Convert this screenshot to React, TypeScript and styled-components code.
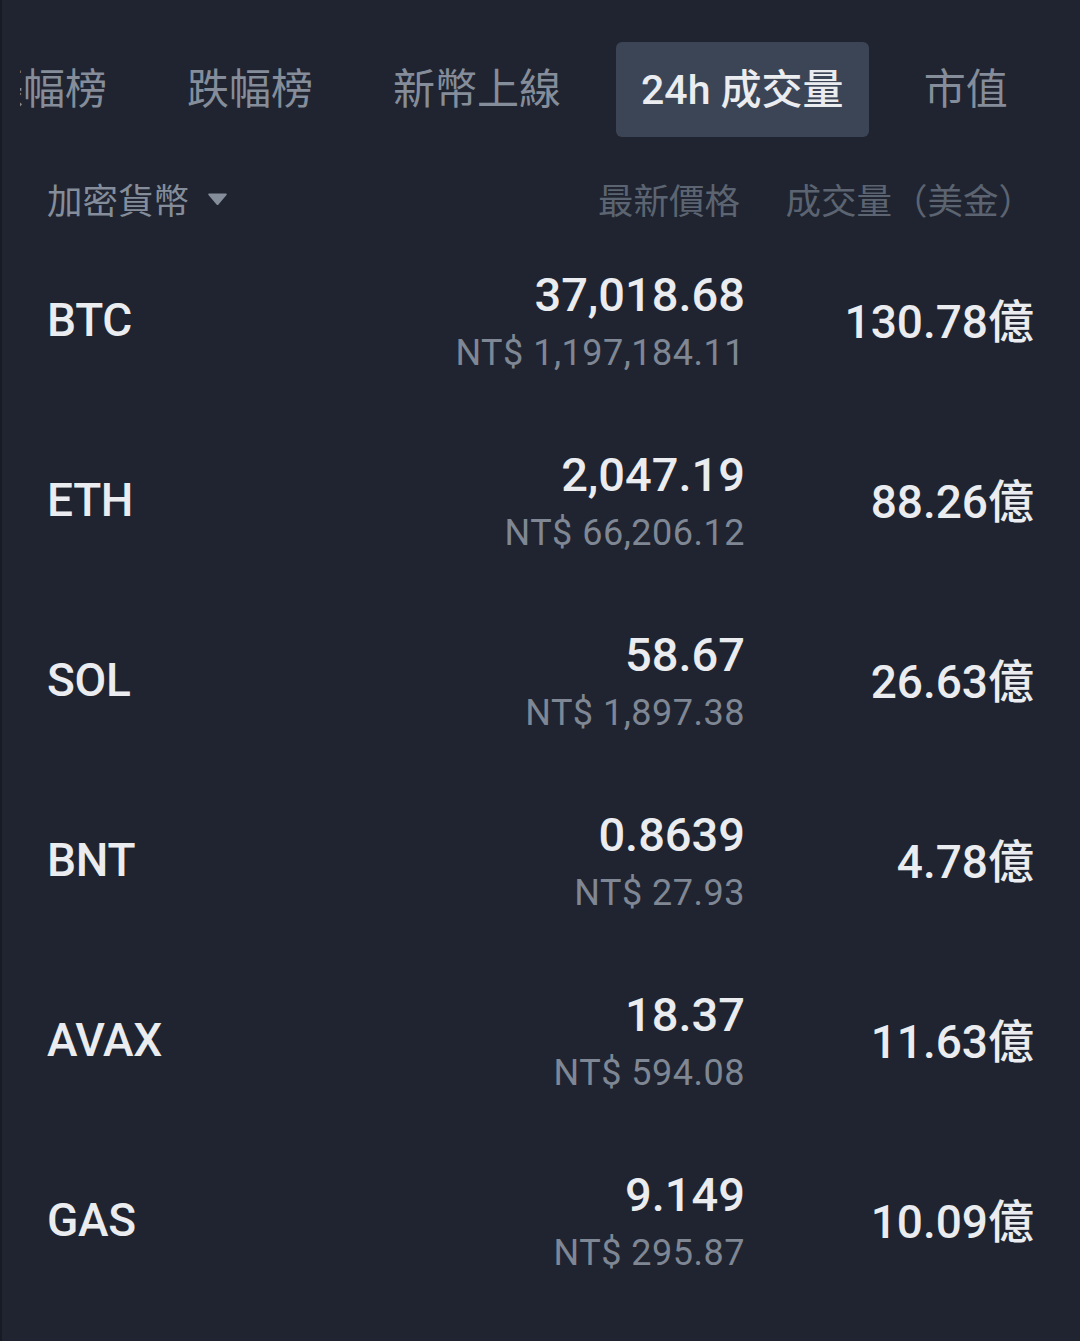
import React from "react";
import styled, { createGlobalStyle } from "styled-components";

const Global = createGlobalStyle`
  html, body { margin: 0; padding: 0; background: #1f2430; }
  body { font-family: Roboto, "Noto Sans CJK TC", sans-serif; }
  * { box-sizing: border-box; }
`;

const Page = styled.div`
  width: 1080px;
  height: 1341px;
  background: #1f2430;
  border-left: 2px solid #171b23;
  overflow: hidden;
`;

const TabViewport = styled.div`
  margin: 42px 0 0 18px;
  overflow: hidden;
  height: 95px;
`;

const TabStrip = styled.div`
  display: flex;
  gap: 30px;
  margin-left: -64px;
  height: 95px;
  white-space: nowrap;
`;

const Tab = styled.div<{ $active?: boolean }>`
  display: flex;
  align-items: center;
  padding: 0 25px 8px;
  height: 95px;
  border-radius: 6px;
  font-family: Roboto, "Noto Sans CJK TC", sans-serif;
  font-size: ${(p) => (p.$active ? "41px" : "42px")};
  font-weight: ${(p) => (p.$active ? 500 : 400)};
  color: ${(p) => (p.$active ? "#eaecef" : "#858d9a")};
  background: ${(p) => (p.$active ? "#3c4555" : "transparent")};
  flex: none;
`;

const Table = styled.div`
  padding: 0 46px 0 45px;
`;

const HeaderRow = styled.div`
  display: grid;
  grid-template-columns: 1fr auto 294px;
  align-items: center;
  height: 93px;
  padding-top: 30px;
`;

const HeadLabel = styled.div<{ $dim?: boolean }>`
  display: flex;
  align-items: center;
  justify-content: ${(p) => (p.$dim ? "flex-end" : "flex-start")};
  gap: 18px;
  font-family: "Noto Sans CJK TC", sans-serif;
  font-size: 35.5px;
  color: ${(p) => (p.$dim ? "#5c6472" : "#858d9a")};
`;

const Row = styled.div`
  display: grid;
  grid-template-columns: 1fr auto 289px;
  align-items: center;
  height: 180px;
`;

const Symbol = styled.div`
  font-family: Roboto, sans-serif;
  font-size: 46px;
  font-weight: 500;
  color: #eaecef;
  letter-spacing: -0.3px;
`;

const PriceCol = styled.div`
  display: flex;
  flex-direction: column;
  align-items: flex-end;
  gap: 10px;
`;

const Price = styled.div`
  font-family: Roboto, sans-serif;
  font-size: 47px;
  line-height: 56px;
  font-weight: 500;
  color: #eaecef;
`;

const Fiat = styled.div`
  font-family: Roboto, sans-serif;
  font-size: 36px;
  line-height: 40px;
  color: #7f8794;
  letter-spacing: 0.5px;
`;

const Volume = styled.div`
  text-align: right;
  font-family: Roboto, "Noto Sans CJK TC", sans-serif;
  font-size: 46px;
  font-weight: 500;
  color: #eaecef;
  padding-bottom: 4px;
`;

const Caret = () => (
  <svg width="21" height="14" viewBox="0 0 21 14">
    <path d="M2 1.5 H19 Q20.5 1.5 19.5 3 L11.5 12.5 Q10.5 13.5 9.5 12.5 L1.5 3 Q0.5 1.5 2 1.5 Z" fill="#858d9a" />
  </svg>
);

const tabs = ["漲幅榜", "跌幅榜", "新幣上線", "24h 成交量", "市值"];

const rows = [
  { s: "BTC", p: "37,018.68", f: "NT$ 1,197,184.11", v: "130.78億" },
  { s: "ETH", p: "2,047.19", f: "NT$ 66,206.12", v: "88.26億" },
  { s: "SOL", p: "58.67", f: "NT$ 1,897.38", v: "26.63億" },
  { s: "BNT", p: "0.8639", f: "NT$ 27.93", v: "4.78億" },
  { s: "AVAX", p: "18.37", f: "NT$ 594.08", v: "11.63億" },
  { s: "GAS", p: "9.149", f: "NT$ 295.87", v: "10.09億" },
];

export default function App() {
  return (
    <Page>
      <Global />
      <TabViewport>
        <TabStrip>
          {tabs.map((t) => (
            <Tab key={t} $active={t === "24h 成交量"}>
              {t}
            </Tab>
          ))}
        </TabStrip>
      </TabViewport>
      <Table>
        <HeaderRow>
          <HeadLabel>
            加密貨幣 <Caret />
          </HeadLabel>
          <HeadLabel $dim>最新價格</HeadLabel>
          <HeadLabel $dim>成交量（美金）</HeadLabel>
        </HeaderRow>
        {rows.map((r) => (
          <Row key={r.s}>
            <Symbol>{r.s}</Symbol>
            <PriceCol>
              <Price>{r.p}</Price>
              <Fiat>{r.f}</Fiat>
            </PriceCol>
            <Volume>{r.v}</Volume>
          </Row>
        ))}
      </Table>
    </Page>
  );
}
